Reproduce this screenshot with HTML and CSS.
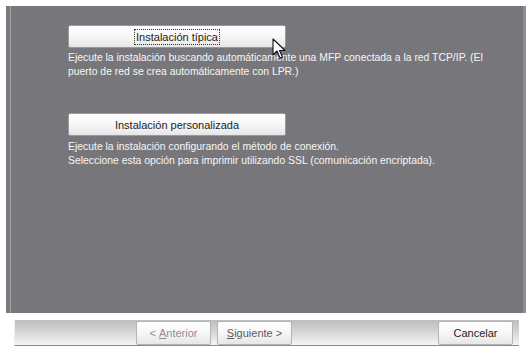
FILE: index.html
```html
<!DOCTYPE html>
<html lang="es">
<head>
<meta charset="utf-8">
<link rel="stylesheet" href="styles.css">
</head>
<body>
<div class="window">
  <div class="panel">
    <div class="option">
      <div class="btn big"><span class="focus">Instalación típica</span></div>
      <p class="desc">Ejecute la instalación buscando automáticamente una MFP conectada a la red TCP/IP. (El<br>puerto de red se crea automáticamente con LPR.)</p>
    </div>
    <div class="option second">
      <div class="btn big">Instalación personalizada</div>
      <p class="desc">Ejecute la instalación configurando el método de conexión.<br>Seleccione esta opción para imprimir utilizando SSL (comunicación encriptada).</p>
    </div>
    <svg class="cursor" width="14" height="22" viewBox="0 0 14 22"><path d="M1 1 L1 17 L5 13 L8 20 L10.5 19 L7.5 12.5 L13 12.5 Z" fill="#fff" stroke="#111" stroke-width="1.1" stroke-linejoin="round"/></svg>
  </div>
  <div class="bar">
    <div class="nav">
      <div class="btn small disabled">&lt;&nbsp;<u>A</u>nterior</div>
      <div class="btn small muted"><u>S</u>iguiente&nbsp;&gt;</div>
    </div>
    <div class="btn small">Cancelar</div>
  </div>
</div>
</body>
</html>
```

FILE: styles.css
```css
html, body {
  margin: 0;
  padding: 0;
  background: #ffffff;
}
body {
  font-family: "Liberation Sans", Arial, sans-serif;
  font-size: 10.4px;
  width: 529px;
  height: 356px;
  overflow: hidden;
}
.window {
  padding: 6px 3px 0 6px;
}
.panel {
  position: relative;
  height: 307px;
  background: linear-gradient(to right, #7a7a7e 0, #7a7a7e 4px, #a4a4a8 4px, #a4a4a8 5px, #77777b 5px, #77777b calc(100% - 3px), #8e8e92 calc(100% - 3px));
  padding: 19px 0 0 62px;
  box-sizing: border-box;
}
.option.second {
  margin-top: 34px;
}
.btn {
  display: flex;
  align-items: center;
  justify-content: center;
  box-sizing: border-box;
  color: #1e1e1e;
  background: linear-gradient(#ffffff 0%, #f7f7f7 50%, #e6e6e6 100%);
  border: 1px solid #9a9a9e;
  border-radius: 2px;
}
.btn.big {
  width: 218px;
  height: 23px;
  font-size: 11px;
}
.focus {
  border: 1px dotted #333;
  padding: 0 1px;
  line-height: 14px;
}
.desc {
  margin: 3px 0 0 0;
  color: #f6f6f6;
  line-height: 14px;
  white-space: nowrap;
}
.second .desc {
  margin-top: 4px;
}
.cursor {
  position: absolute;
  left: 266px;
  top: 32px;
}
.bar {
  margin: 7px 7px 0 8px;
  height: 26px;
  box-sizing: border-box;
  background: linear-gradient(#bdbdbd 0%, #d4d4d4 45%, #f6f6f6 100%);
  border-bottom: 1px solid #8a8a8a;
  border-left: 1px solid #f0f0f0;
  display: flex;
  align-items: flex-start;
  padding: 1px 6px 0 121px;
}
.nav {
  display: flex;
  gap: 6px;
  flex: 1;
}
.btn.small {
  width: 75px;
  height: 24px;
  font-size: 11px;
  border-color: #b4b4b4;
}
.btn.disabled {
  color: #8e8e8e;
}
.btn.muted {
  color: #5a5a5a;
}
u {
  text-decoration: underline;
}
```
